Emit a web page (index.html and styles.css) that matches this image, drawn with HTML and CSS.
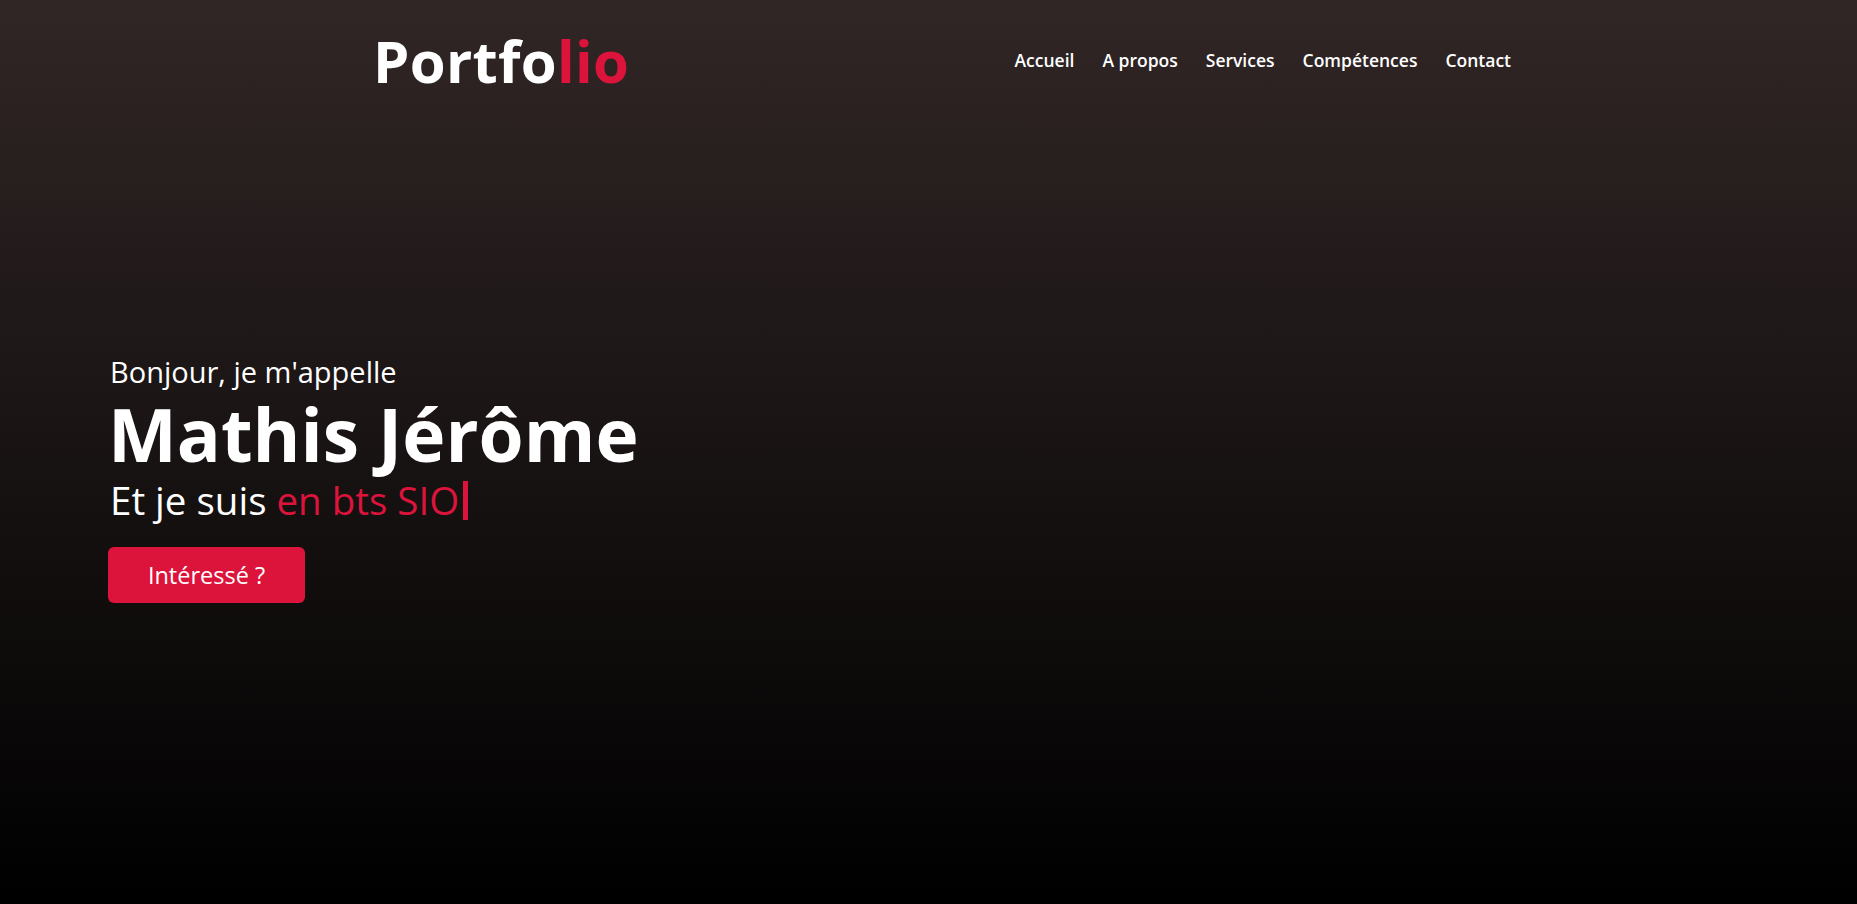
FILE: index.html
```html
<!DOCTYPE html>
<html lang="fr">
<head>
<meta charset="utf-8">
<title>Portfolio</title>
<link rel="stylesheet" href="styles.css">
</head>
<body>
<div class="page">
  <header class="header">
    <a class="logo" href="#">Portfo<span class="accent">lio</span></a>
    <nav class="nav">
      <a href="#">Accueil</a>
      <a href="#">A propos</a>
      <a href="#">Services</a>
      <a href="#">Compétences</a>
      <a href="#">Contact</a>
    </nav>
  </header>
  <section class="hero">
    <div class="hero-content">
      <p class="hello">Bonjour, je m'appelle</p>
      <h1 class="name">Mathis Jérôme</h1>
      <p class="role">Et je suis <span class="accent">en bts SIO</span><span class="cursor"></span></p>
      <a class="btn" href="#">Intéressé ?</a>
    </div>
  </section>
</div>
</body>
</html>
```
FILE: styles.css
```css
* { box-sizing: border-box; margin: 0; padding: 0; }
html, body { height: 100%; }
body {
  font-family: "Open Sans", "Noto Sans", sans-serif;
  color: #fff;
  background: #000;
}
a { color: inherit; text-decoration: none; }
.page {
  height: 904px;
  background: linear-gradient(to bottom, #312626 0%, #000 100%);
  display: flex;
  flex-direction: column;
}
.header {
  display: flex;
  align-items: flex-start;
  justify-content: space-between;
  padding: 32px 346px 0 373px;
  height: 100px;
}
.logo {
  font-size: 58px;
  font-weight: 700;
  line-height: 58px;
  letter-spacing: 0.3px;
}
.accent { color: #dc143c; }
.nav {
  display: flex;
  gap: 28px;
  margin-top: 16px;
  font-size: 17.5px;
  line-height: 24px;
  font-weight: 600;
}
.hero {
  flex: 1;
  display: flex;
  align-items: flex-start;
  padding: 252px 0 0 108px;
}
.hero-content {
  display: flex;
  flex-direction: column;
  align-items: flex-start;
}
.hello {
  font-size: 29px;
  line-height: 40px;
  padding-left: 2px;
}
.name {
  font-size: 73px;
  font-weight: 700;
  line-height: 83px;
}
.role {
  font-size: 38.5px;
  line-height: 50px;
  padding-left: 2px;
}
.cursor {
  display: inline-block;
  width: 5px;
  height: 39px;
  margin-left: 4px;
  background: #dc143c;
  vertical-align: -5px;
}
.btn {
  margin-top: 22px;
  background: #dc143c;
  color: #fff;
  font-size: 23.5px;
  height: 56px;
  width: 197px;
  display: flex;
  align-items: center;
  justify-content: center;
  border-radius: 6px;
}
```
